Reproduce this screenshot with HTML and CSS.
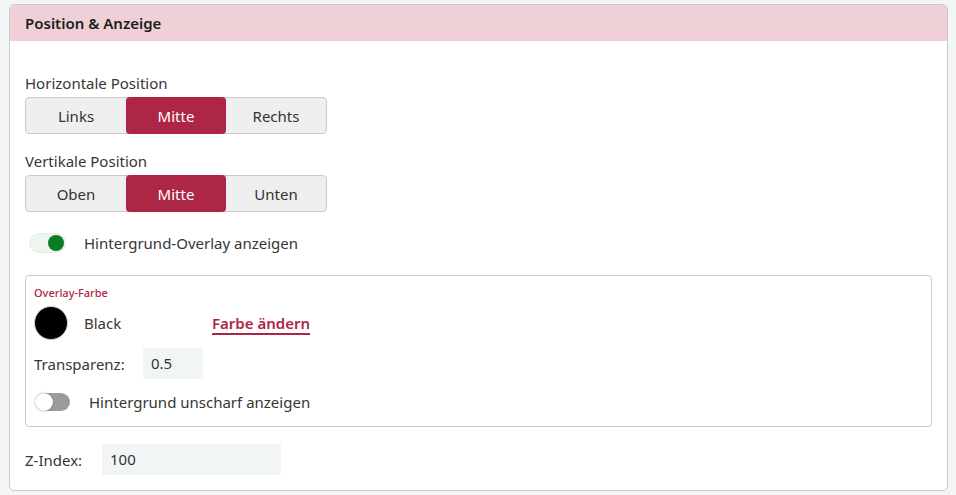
FILE: index.html
```html
<!DOCTYPE html>
<html lang="de">
<head>
<meta charset="utf-8">
<title>Position &amp; Anzeige</title>
<link rel="stylesheet" href="styles.css">
</head>
<body>
<div class="card">
  <div class="card-header">Position &amp; Anzeige</div>
  <div class="card-body">
    <div class="field-label">Horizontale Position</div>
    <div class="btn-group">
      <button class="seg">Links</button>
      <button class="seg active">Mitte</button>
      <button class="seg">Rechts</button>
    </div>
    <div class="field-label second">Vertikale Position</div>
    <div class="btn-group">
      <button class="seg">Oben</button>
      <button class="seg active">Mitte</button>
      <button class="seg">Unten</button>
    </div>
    <div class="toggle-row on-row">
      <span class="switch on"><span class="knob"></span></span>
      <span class="toggle-text">Hintergrund-Overlay anzeigen</span>
    </div>
    <div class="overlay-box">
      <div class="legend">Overlay-Farbe</div>
      <div class="color-row">
        <span class="swatch"></span>
        <span class="color-name">Black</span>
        <a class="change-link" href="#">Farbe ändern</a>
      </div>
      <div class="input-row">
        <span class="input-label">Transparenz:</span>
        <span class="text-input small">0.5</span>
      </div>
      <div class="toggle-row off-row">
        <span class="switch off"><span class="knob"></span></span>
        <span class="toggle-text">Hintergrund unscharf anzeigen</span>
      </div>
    </div>
    <div class="input-row zrow">
      <span class="input-label">Z-Index:</span>
      <span class="text-input wide">100</span>
    </div>
  </div>
</div>
</body>
</html>
```
FILE: styles.css
```css
* { box-sizing: border-box; }
html, body { margin: 0; padding: 0; }
body {
  background: #f3f5f6;
  font-family: "Noto Sans", "Open Sans", sans-serif;
  color: #363636;
  font-size: 15px;
  padding: 4px 9px 0 9px;
  width: 956px;
  height: 495px;
}
.card {
  width: 939px;
  height: 487px;
  background: #fff;
  border: 1px solid #c9cccf;
  border-radius: 5px;
  overflow: hidden;
}
.card-header {
  background: #efd0d7;
  height: 36px;
  line-height: 36px;
  padding-left: 15px;
  font-weight: 600;
  font-size: 15px;
  color: #1e1e1e;
}
.card-body {
  padding: 31px 15px 15px 15px;
}
.field-label {
  line-height: 22px;
  height: 22px;
  margin-bottom: 3px;
}
.field-label.second { margin-top: 16px; }
.btn-group {
  display: flex;
  width: 302px;
  height: 37px;
  border: 1px solid #cbcbcb;
  border-radius: 4px;
  background: #efefef;
}
.seg {
  flex: 1;
  border: 0;
  background: transparent;
  font: inherit;
  color: #333;
  padding: 0;
  margin: 0;
  border-radius: 4px;
}
.seg + .seg { border-left: 1px solid #d4d4d4; }
.seg.active {
  background: #ae2645;
  color: #fff;
  margin: -1px 0;
  border-left: 0;
}
.seg.active + .seg { border-left: 0; }
.toggle-row {
  display: flex;
  align-items: center;
}
.on-row { margin-top: 21px; height: 20px; }
.switch {
  position: relative;
  display: inline-block;
  border-radius: 11px;
  flex: none;
}
.switch.on {
  width: 37px;
  height: 20px;
  margin-left: 4px;
  background: #eef4ee;
  border: 1px solid #e3ebe3;
}
.switch.on .knob {
  position: absolute;
  right: 1px;
  top: 1px;
  width: 16px;
  height: 16px;
  border-radius: 50%;
  background: #0a7d22;
}
.on-row .toggle-text { margin-left: 18px; }
.overlay-box {
  margin-top: 22px;
  border: 1px solid #c9cccf;
  border-radius: 4px;
  height: 152px;
  padding: 10px 8px 0 8px;
}
.legend {
  font-size: 11px;
  line-height: 14px;
  color: #ae2645;
  font-weight: 500;
}
.color-row {
  display: flex;
  align-items: center;
  margin-top: 6px;
  height: 34px;
}
.swatch {
  width: 34px;
  height: 34px;
  border-radius: 50%;
  background: #000;
  border: 1px solid #ccc;
  flex: none;
}
.color-name {
  margin-left: 16px;
  width: 128px;
}
.change-link {
  color: #ae2645;
  font-weight: 600;
  text-decoration: underline;
  text-decoration-thickness: 2px;
  text-underline-offset: 4px;
}
.input-row {
  display: flex;
  align-items: center;
  height: 31px;
  margin-top: 8px;
}
.input-row .input-label { width: 109px; }
.text-input {
  height: 31px;
  line-height: 31px;
  background: #f2f5f6;
  padding-left: 8px;
  color: #333;
}
.text-input.small { width: 60px; }
.off-row { margin-top: 14px; height: 18px; }
.switch.off {
  width: 35px;
  height: 18px;
  margin-left: 1px;
  background: #9b9b9b;
}
.switch.off .knob {
  position: absolute;
  left: 0;
  top: 0;
  width: 18px;
  height: 18px;
  border-radius: 50%;
  background: #fff;
  box-shadow: 0 0 2px rgba(0,0,0,0.35);
}
.off-row .toggle-text { margin-left: 19px; }
.zrow { margin-top: 17px; }
.zrow .input-label { width: 77px; }
.text-input.wide { width: 179px; }
```
